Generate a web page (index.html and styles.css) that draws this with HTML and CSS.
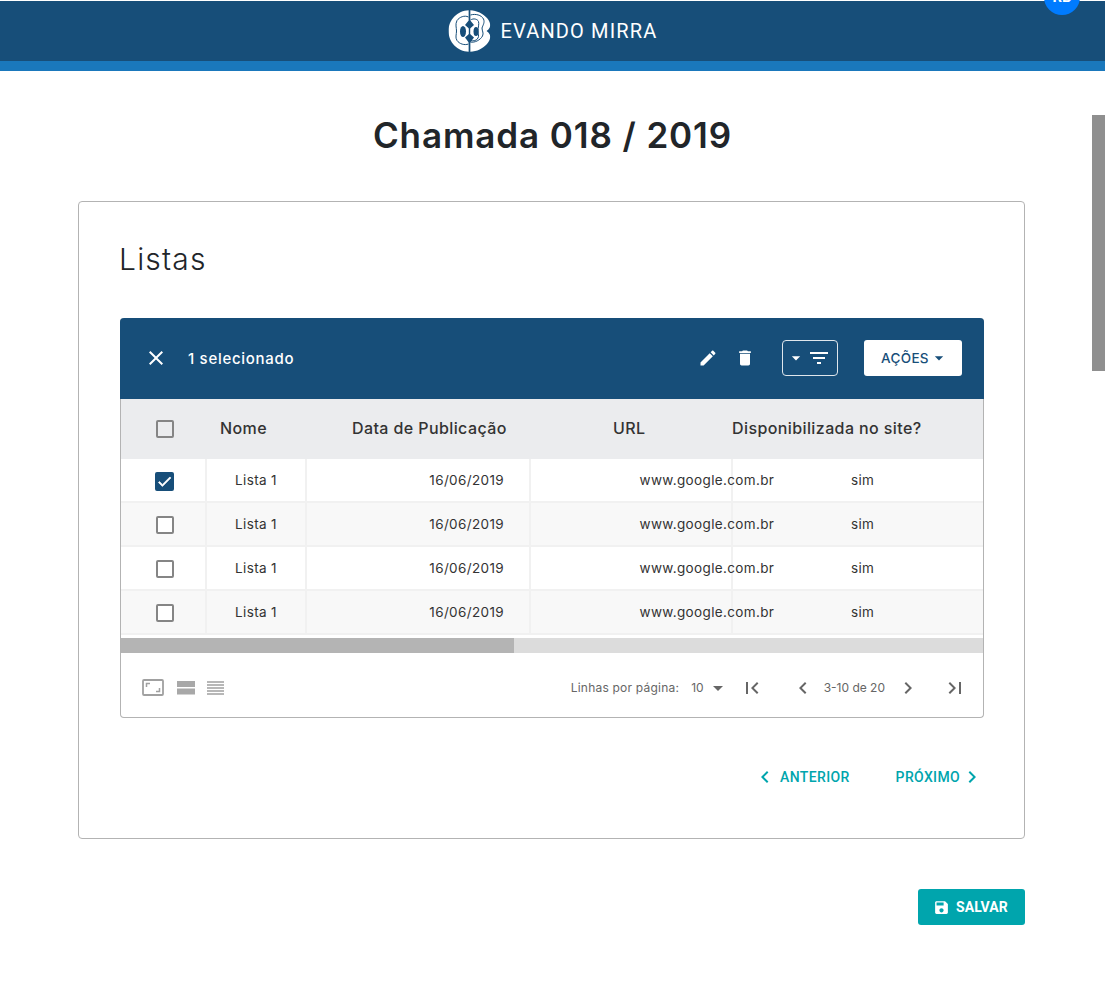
FILE: index.html
```html
<!DOCTYPE html>
<html lang="pt-BR">
<head>
<meta charset="utf-8">
<title>Chamada 018 / 2019</title>
<link rel="stylesheet" href="styles.css">
</head>
<body>
<svg class="defs" width="0" height="0" aria-hidden="true">
  <symbol id="i-close" viewBox="0 0 24 24"><path d="M19 6.41L17.59 5 12 10.59 6.41 5 5 6.41 10.59 12 5 17.59 6.41 19 12 13.41 17.59 19 19 17.59 13.41 12z"/></symbol>
  <symbol id="i-edit" viewBox="0 0 24 24"><path d="M3 17.25V21h3.75L17.81 9.94l-3.75-3.75L3 17.25zM20.71 7.04c.39-.39.39-1.02 0-1.41l-2.34-2.34c-.39-.39-1.02-.39-1.41 0l-1.83 1.83 3.75 3.75 1.83-1.83z"/></symbol>
  <symbol id="i-delete" viewBox="0 0 24 24"><path d="M6 19c0 1.1.9 2 2 2h8c1.1 0 2-.9 2-2V7H6v12zM19 4h-3.5l-1-1h-5l-1 1H5v2h14V4z"/></symbol>
  <symbol id="i-filter" viewBox="0 0 24 24"><path d="M10 18h4v-2h-4v2zM3 6v2h18V6H3zm3 7h12v-2H6v2z"/></symbol>
  <symbol id="i-drop" viewBox="0 0 24 24"><path d="M7 10l5 5 5-5z"/></symbol>
  <symbol id="i-left" viewBox="0 0 24 24"><path d="M15.41 7.41L14 6l-6 6 6 6 1.41-1.41L10.83 12z"/></symbol>
  <symbol id="i-right" viewBox="0 0 24 24"><path d="M10 6L8.59 7.41 13.17 12l-4.58 4.59L10 18l6-6z"/></symbol>
  <symbol id="i-first" viewBox="0 0 24 24"><path d="M18.41 16.59L13.82 12l4.59-4.59L17 6l-6 6 6 6zM6 6h2v12H6z"/></symbol>
  <symbol id="i-last" viewBox="0 0 24 24"><path d="M5.59 7.41L10.18 12l-4.59 4.59L7 18l6-6-6-6zM16 6h2v12h-2z"/></symbol>
  <symbol id="i-save" viewBox="0 0 24 24"><path d="M17 3H5c-1.11 0-2 .9-2 2v14c0 1.1.89 2 2 2h14c1.1 0 2-.9 2-2V7l-4-4zm-5 16c-1.66 0-3-1.34-3-3s1.34-3 3-3 3 1.34 3 3-1.34 3-3 3zm3-10H5V5h10v4z"/></symbol>
  <symbol id="i-check" viewBox="0 0 24 24"><path d="M9 16.17L4.83 12l-1.42 1.41L9 19 21 7l-1.41-1.41z"/></symbol>
</svg>

<header class="topbar">
  <div class="brand">
    <svg class="brand-mark" viewBox="0 0 42 42" aria-hidden="true">
      <path fill="#fff" d="M20.3 0.200C9 0.600 0 9.700 0 21s9 20.400 20.300 20.800zM21.700 0.200V41.800C28.500 41.500 34.500 38.500 38.500 34c2.800-3.200 4-7 2.600-9.800-.6-1.300-1.600-2.400-3-3.200 1.400-.8 2.400-1.900 3-3.200 1.400-2.800.2-6.600-2.600-9.800C34.500 3.500 28.500.5 21.700.200z"/>
      <g fill="none" stroke="#174e79" stroke-width="1">
        <path d="M22 5c5-1.500 11 0 13 4 1.500 3.500-.5 6-1.500 9 0 3 2 5 .5 8-2 4-8 7-12 6"/>
        <path d="M22 10c3-2 7-1 8 1.500.8 2.500-.5 6-.5 9.500s1.300 4.500 0 7c-1.400 2.600-4.500 3.400-7.500 2.500"/>
        <path d="M20 7c-4-2-9 0-11.500 3.500C6.500 14.500 8 17.500 8 21s-1.500 6.500.5 9.500C11 34 16 35.500 20 34"/>
      </g>
      <path fill="#174e79" d="M21 9.500l4.500 5.500-4.500 4-4.500-4zM21 23.500l4.500 4-4.500 6-4.500-6z"/>
      <ellipse cx="14.500" cy="21.500" rx="3" ry="5.500" fill="#174e79"/>
      <ellipse cx="27.500" cy="21.500" rx="2.500" ry="4.500" fill="#174e79"/>
      <path fill="#174e79" d="M20.300 0h1.400v10h-1.400zM20.300 32h1.400v10h-1.400z"/>
    </svg>
    <span class="brand-name">EVANDO MIRRA</span>
  </div>
  <div class="avatar">RB</div>
</header>
<div class="accent"></div>
<div class="scroll-thumb"></div>

<main class="page">
  <h1 class="title">Chamada 018 / 2019</h1>

  <section class="card">
    <h2 class="card-title">Listas</h2>

    <div class="table">
      <div class="toolbar">
        <svg class="ico ico-close"><use href="#i-close"/></svg>
        <span class="selected">1 selecionado</span>
        <svg class="ico ico-edit"><use href="#i-edit"/></svg>
        <svg class="ico ico-delete"><use href="#i-delete"/></svg>
        <button class="filter-btn" type="button">
          <svg class="ico ico-caret"><use href="#i-drop"/></svg>
          <svg class="ico ico-filter"><use href="#i-filter"/></svg>
        </button>
        <button class="actions-btn" type="button">AÇÕES<svg class="ico ico-caret-dark"><use href="#i-drop"/></svg></button>
      </div>

      <div class="head-row">
        <span class="box head-box"></span>
        <span class="head head-name">Nome</span>
        <span class="head head-date">Data de Publicação</span>
        <span class="head head-url">URL</span>
        <span class="head head-site">Disponibilizada no site?</span>
      </div>

      <div class="row">
        <div class="cell cell-check"><span class="box box-on"><svg class="ico ico-check"><use href="#i-check"/></svg></span></div>
        <div class="cell cell-name">Lista 1</div>
        <div class="cell cell-date">16/06/2019</div>
        <div class="cell cell-url">www.google.com.br</div>
        <div class="cell cell-site">sim</div>
      </div>
      <div class="row row-alt">
        <div class="cell cell-check"><span class="box"></span></div>
        <div class="cell cell-name">Lista 1</div>
        <div class="cell cell-date">16/06/2019</div>
        <div class="cell cell-url">www.google.com.br</div>
        <div class="cell cell-site">sim</div>
      </div>
      <div class="row">
        <div class="cell cell-check"><span class="box"></span></div>
        <div class="cell cell-name">Lista 1</div>
        <div class="cell cell-date">16/06/2019</div>
        <div class="cell cell-url">www.google.com.br</div>
        <div class="cell cell-site">sim</div>
      </div>
      <div class="row row-alt">
        <div class="cell cell-check"><span class="box"></span></div>
        <div class="cell cell-name">Lista 1</div>
        <div class="cell cell-date">16/06/2019</div>
        <div class="cell cell-url">www.google.com.br</div>
        <div class="cell cell-site">sim</div>
      </div>

      <div class="hscroll"><div class="hscroll-thumb"></div></div>

      <div class="table-foot">
        <div class="density">
          <svg class="density-full" viewBox="0 0 22 17" aria-hidden="true">
            <rect x="1" y="1" width="20" height="15" rx="1" fill="none" stroke="#a0a0a0" stroke-width="1.800"/>
            <path d="M4.500 8V4.500H8M17.500 9v3.500H14" fill="none" stroke="#a0a0a0" stroke-width="1.500"/>
          </svg>
          <svg class="density-mid" viewBox="0 0 18 14" aria-hidden="true">
            <rect x="0" y="0" width="18" height="6" fill="#a8a8a8"/>
            <rect x="0" y="7.500" width="18" height="6" fill="#a8a8a8"/>
          </svg>
          <svg class="density-low" viewBox="0 0 17 14" aria-hidden="true">
            <path d="M0 1h17M0 4h17M0 7h17M0 10h17M0 13h17" stroke="#a0a0a0" stroke-width="1.400"/>
          </svg>
        </div>
        <div class="pager">
          <span class="pager-label">Linhas por página:</span>
          <span class="pager-size">10</span>
          <svg class="ico ico-size"><use href="#i-drop"/></svg>
          <svg class="ico ico-page ico-first"><use href="#i-first"/></svg>
          <svg class="ico ico-page ico-prev"><use href="#i-left"/></svg>
          <span class="pager-range">3-10 de 20</span>
          <svg class="ico ico-page ico-next"><use href="#i-right"/></svg>
          <svg class="ico ico-page ico-last"><use href="#i-last"/></svg>
        </div>
      </div>
    </div>

    <nav class="step-nav">
      <a class="step step-prev"><svg class="ico ico-step"><use href="#i-left"/></svg>ANTERIOR</a>
      <a class="step step-next">PRÓXIMO<svg class="ico ico-step"><use href="#i-right"/></svg></a>
    </nav>
  </section>

  <div class="save-row">
    <button class="save-btn" type="button"><svg class="ico ico-save"><use href="#i-save"/></svg>SALVAR</button>
  </div>
</main>
</body>
</html>
```
FILE: styles.css
```css
* { box-sizing: border-box; }
html, body { margin: 0; height: 100%; overflow: hidden; background: #fff; }
body { font-family: "Inter", "Liberation Sans", sans-serif; color: #212529; position: relative; }
.defs { position: absolute; }
.ico { display: block; fill: currentColor; flex: none; }

.topbar { margin-top: 1px; height: 60px; background: #174e79; display: flex; justify-content: center; align-items: center; }
.brand { display: flex; align-items: center; gap: 10px; transform: translateX(0.5px); }
.brand-mark { width: 42px; height: 42px; display: block; }
.brand-name { font-family: "Roboto", sans-serif; font-weight: 400; font-size: 20px; letter-spacing: 1.15px; color: #fff; white-space: nowrap; }
.accent { height: 10px; background: #1a78bc; }
.avatar { position: absolute; left: 1044px; top: -21px; width: 36px; height: 36px; border-radius: 50%; background: #007bff; color: #fff; font: 700 15px/36px "Roboto", sans-serif; text-align: center; }
.scroll-thumb { position: absolute; left: 1092px; top: 115px; width: 13px; height: 256px; background: #8f8f8f; }

.page { margin: 0 80px 0 78px; }
.title { margin: 43px 0 0; height: 87px; font-size: 35px; line-height: 42px; letter-spacing: .9px; font-weight: 600; text-align: center; color: #212529; transform: translateX(1px); }

.card { height: 638px; border: 1px solid #b3b3b3; border-radius: 4px; padding: 40px 40px 0 41px; }
.card-title { margin: 0; height: 76px; font-size: 30px; line-height: 34px; letter-spacing: 1.2px; font-weight: 300; color: #212529; transform: translateX(-1px); }

.table { height: 400px; border: 1px solid #b3b3b3; border-top: 0; border-radius: 4px; }
.toolbar { height: 81px; margin: 0 -1px; padding-bottom: 2px; background: #174e79; border-radius: 4px 4px 0 0; color: #fff; display: flex; align-items: center; }
.ico-close { width: 24px; height: 24px; margin-left: 24px; }
.selected { margin: 2px 0 0 20px; font-size: 15px; font-weight: 500; letter-spacing: .7px; }
.ico-edit { width: 20px; height: 20px; margin-left: auto; }
.ico-delete { width: 20px; height: 20px; margin-left: 17px; }
.filter-btn { width: 56px; height: 36px; margin-left: 27px; padding: 0 0 0 3px; background: none; border: 1px solid #dfe6ec; border-radius: 4px; color: #fff; display: flex; align-items: center; }
.ico-caret { width: 20px; height: 20px; }
.ico-filter { width: 24px; height: 24px; margin-left: 1px; }
.actions-btn { width: 98px; height: 36px; margin: 0 22px 0 26px; padding: 0 0 0 17px; background: #fff; border: 0; border-radius: 3px; color: #174e79; font: 500 13.5px "Inter", sans-serif; letter-spacing: .35px; display: flex; align-items: center; }
.ico-caret-dark { width: 20px; height: 20px; margin-left: 0; }

.head-row { height: 60px; background: #ebecee; display: flex; align-items: center; position: relative; }
.head { position: absolute; top: 20px; font-size: 16px; line-height: 19px; letter-spacing: .4px; font-weight: 500; color: #333; white-space: nowrap; }
.head-box { margin-left: 35px; }
.head-name { left: 99px; }
.head-date { left: 231px; }
.head-url { left: 492px; }
.head-site { left: 611px; }

.box { display: flex; align-items: center; justify-content: center; width: 18px; height: 18px; border: 2px solid #858585; border-radius: 2px; background: #fff; }
.head-row .box { background: transparent; }
.box-on { width: 19px; height: 19px; background: #174e79; border-color: #174e79; color: #fff; }
.ico-check { width: 17px; height: 17px; stroke: currentColor; stroke-width: 1; }

.row { height: 44px; display: grid; grid-template-columns: 86px 100px 224px 202px 1fr; border-bottom: 2px solid #f1f1f1; font-size: 13.5px; letter-spacing: .36px; color: #333; }
.row-alt { background: #f8f8f8; }
.cell { display: flex; align-items: center; border-right: 2px solid #f1f1f1; white-space: nowrap; }
.cell-check { justify-content: center; padding: 2px 0 0 3px; }
.cell-name { justify-content: center; }
.cell-date { justify-content: flex-end; padding-right: 25px; }
.cell-url { padding-left: 108.500px; }
.cell-site { padding-left: 118px; border-right: 0; }

.hscroll { margin-top: 3px; height: 15px; background: #dcdcdc; }
.hscroll-thumb { width: 393px; height: 100%; background: #b4b4b4; }

.table-foot { height: 66px; display: flex; align-items: center; justify-content: space-between; padding: 3px 16px 0 21px; }
.density { display: flex; align-items: center; }
.density-full { width: 22px; height: 17px; display: block; }
.density-mid { width: 18px; height: 14px; margin-left: 13px; display: block; }
.density-low { width: 17px; height: 14px; margin-left: 12px; display: block; }
.pager { display: flex; align-items: center; font-size: 12px; color: #666; }
.pager-label { letter-spacing: .22px; }
.pager-size { margin-left: 12px; }
.ico-size { width: 24px; height: 24px; margin-left: 2px; color: #666; }
.ico-page { width: 24px; height: 24px; color: #666; }
.ico-first { margin-left: 10px; }
.ico-prev { margin-left: 27px; }
.pager-range { margin-left: 9px; }
.ico-next { margin-left: 11px; }
.ico-last { margin-left: 23px; }

.step-nav { display: flex; justify-content: flex-end; padding: 48px 0 0; }
.step { display: flex; align-items: center; height: 22px; font: 500 14px "Roboto", sans-serif; letter-spacing: .35px; color: #00a5ad; }
.ico-step { width: 24px; height: 24px; }
.step-prev .ico-step { margin-right: 3px; }
.step-next { margin-left: 46px; }
.step-next .ico-step { margin-left: 0; }

.save-row { display: flex; justify-content: flex-end; margin-top: 50px; }
.save-btn { width: 107px; height: 36px; padding: 0 0 0 15px; background: #00a5ad; border: 0; border-radius: 3px; color: #fff; font: 700 14px "Roboto", sans-serif; letter-spacing: .1px; display: flex; align-items: center; }
.ico-save { width: 17px; height: 17px; margin-right: 6px; }
```
